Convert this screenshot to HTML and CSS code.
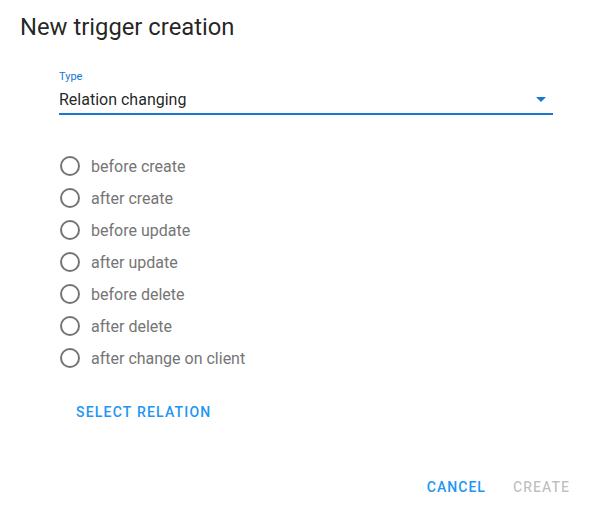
FILE: index.html
```html
<!DOCTYPE html>
<html>
<head>
<meta charset="utf-8">
<link rel="stylesheet" href="styles.css">
</head>
<body>
<div class="dialog">
  <h2 class="title">New trigger creation</h2>
  <div class="content">
    <div class="select">
      <label class="select-label">Type</label>
      <div class="select-value">
        <span>Relation changing</span>
        <svg class="arrow" width="24" height="24" viewBox="0 0 24 24"><path d="M7 10l5 5 5-5z" fill="#1976d2"/></svg>
      </div>
    </div>
    <div class="radios">
      <div class="radio"><span class="circle"></span><span class="rlabel">before create</span></div>
      <div class="radio"><span class="circle"></span><span class="rlabel">after create</span></div>
      <div class="radio"><span class="circle"></span><span class="rlabel">before update</span></div>
      <div class="radio"><span class="circle"></span><span class="rlabel">after update</span></div>
      <div class="radio"><span class="circle"></span><span class="rlabel">before delete</span></div>
      <div class="radio"><span class="circle"></span><span class="rlabel">after delete</span></div>
      <div class="radio"><span class="circle"></span><span class="rlabel">after change on client</span></div>
    </div>
    <button class="btn select-btn">Select relation</button>
  </div>
  <div class="actions">
    <button class="btn">Cancel</button>
    <button class="btn disabled">Create</button>
  </div>
</div>
</body>
</html>
```

FILE: styles.css
```css
* { box-sizing: border-box; }
html, body { margin: 0; padding: 0; background: #fff; }
body { font-family: Roboto, "Noto Sans", sans-serif; width: 593px; height: 511px; overflow: hidden; }
.dialog { display: flex; flex-direction: column; height: 511px; }
.title { margin: 0; padding: 12px 20px 0; font-size: 23.8px; font-weight: 400; line-height: 30px; color: rgba(0,0,0,0.87); }
.content { padding: 28px 40px 0 59px; }
.select { width: 494px; }
.select-label { display: block; font-size: 11px; line-height: 13px; color: #1976d2; }
.select-value { display: flex; align-items: center; justify-content: space-between; height: 32px; border-bottom: 2px solid #1976d2; font-size: 16px; color: rgba(0,0,0,0.87); padding-top: 2px; }
.arrow { margin-right: 0; }
.radios { margin-top: 35px; display: flex; flex-direction: column; }
.radio { display: flex; align-items: center; height: 32px; }
.circle { width: 20px; height: 20px; border: 2px solid #757575; border-radius: 50%; margin-left: 1px; margin-right: 11px; }
.rlabel { font-size: 16px; color: #757575; }
.btn { background: none; border: 0; padding: 0; font-family: Roboto, sans-serif; font-size: 14px; font-weight: 500; letter-spacing: 1.2px; text-transform: uppercase; color: #2196f3; }
.select-btn { margin-top: 30px; margin-left: 17px; }
.actions { margin-top: auto; display: flex; justify-content: flex-end; gap: 27px; padding: 0 23px 16px 0; }
.actions .btn { letter-spacing: 1.05px; }
.disabled { color: rgba(0,0,0,0.26); }
```
